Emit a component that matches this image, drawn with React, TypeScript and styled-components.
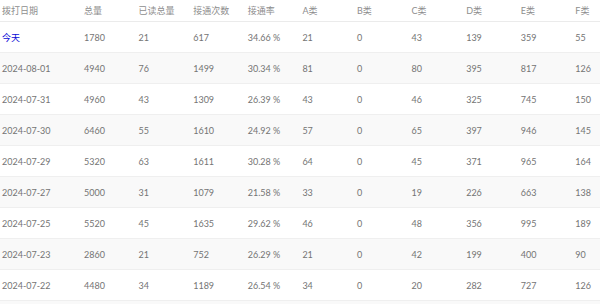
import React from "react";
import styled, { createGlobalStyle } from "styled-components";

const Global = createGlobalStyle`
  html, body { margin: 0; padding: 0; background: #fff; }
  body { width: 600px; height: 304px; overflow: hidden; }
`;

const Wrap = styled.div`
  width: 600px;
  height: 304px;
  overflow: hidden;
  background: #fff;
`;

const Table = styled.table`
  table-layout: fixed;
  width: 628px;
  border-collapse: collapse;
  border-spacing: 0;
  font-family: Lato, "Noto Sans CJK SC", sans-serif;
  font-size: 9px;
  color: #747474;
`;

const HeadCell = styled.th`
  height: 21px;
  padding: 0 0 0 2px;
  text-align: left;
  font-weight: normal;
  color: #8e8e8e;
  border-bottom: 1px solid #ebebeb;
  white-space: nowrap;
  overflow: hidden;
`;

const Row = styled.tr<{ $shade: boolean }>`
  background: ${(p) => (p.$shade ? "#f9f9f9" : "#fff")};
`;

const Cell = styled.td<{ $today?: boolean }>`
  height: 30px;
  padding: 0 0 0 2px;
  text-align: left;
  border-bottom: 1px solid #efefef;
  white-space: nowrap;
  overflow: hidden;
  color: ${(p) => (p.$today ? "#0a0ad6" : "#747474")};
`;

const headers = ["拨打日期", "总量", "已读总量", "接通次数", "接通率", "A类", "B类", "C类", "D类", "E类", "F类"];

const rows: string[][] = [
  ["今天", "1780", "21", "617", "34.66 %", "21", "0", "43", "139", "359", "55"],
  ["2024-08-01", "4940", "76", "1499", "30.34 %", "81", "0", "80", "395", "817", "126"],
  ["2024-07-31", "4960", "43", "1309", "26.39 %", "43", "0", "46", "325", "745", "150"],
  ["2024-07-30", "6460", "55", "1610", "24.92 %", "57", "0", "65", "397", "946", "145"],
  ["2024-07-29", "5320", "63", "1611", "30.28 %", "64", "0", "45", "371", "965", "164"],
  ["2024-07-27", "5000", "31", "1079", "21.58 %", "33", "0", "19", "226", "663", "138"],
  ["2024-07-25", "5520", "45", "1635", "29.62 %", "46", "0", "48", "356", "995", "189"],
  ["2024-07-23", "2860", "21", "752", "26.29 %", "21", "0", "42", "199", "400", "90"],
  ["2024-07-22", "4480", "34", "1189", "26.54 %", "34", "0", "20", "282", "727", "126"],
  ["", "", "", "", "", "", "", "", "", "", ""],
];

export default function App() {
  return (
    <Wrap>
      <Global />
      <Table>
        <colgroup>
          <col style={{ width: 82 }} />
          {headers.slice(1).map((h) => (
            <col key={h} style={{ width: 54.6 }} />
          ))}
        </colgroup>
        <thead>
          <tr>
            {headers.map((h) => (
              <HeadCell key={h}>{h}</HeadCell>
            ))}
          </tr>
        </thead>
        <tbody>
          {rows.map((r, i) => (
            <Row key={i} $shade={i % 2 === 1}>
              {r.map((c, j) => (
                <Cell key={j} $today={j === 0 && c === "今天"}>
                  {c}
                </Cell>
              ))}
            </Row>
          ))}
        </tbody>
      </Table>
    </Wrap>
  );
}
